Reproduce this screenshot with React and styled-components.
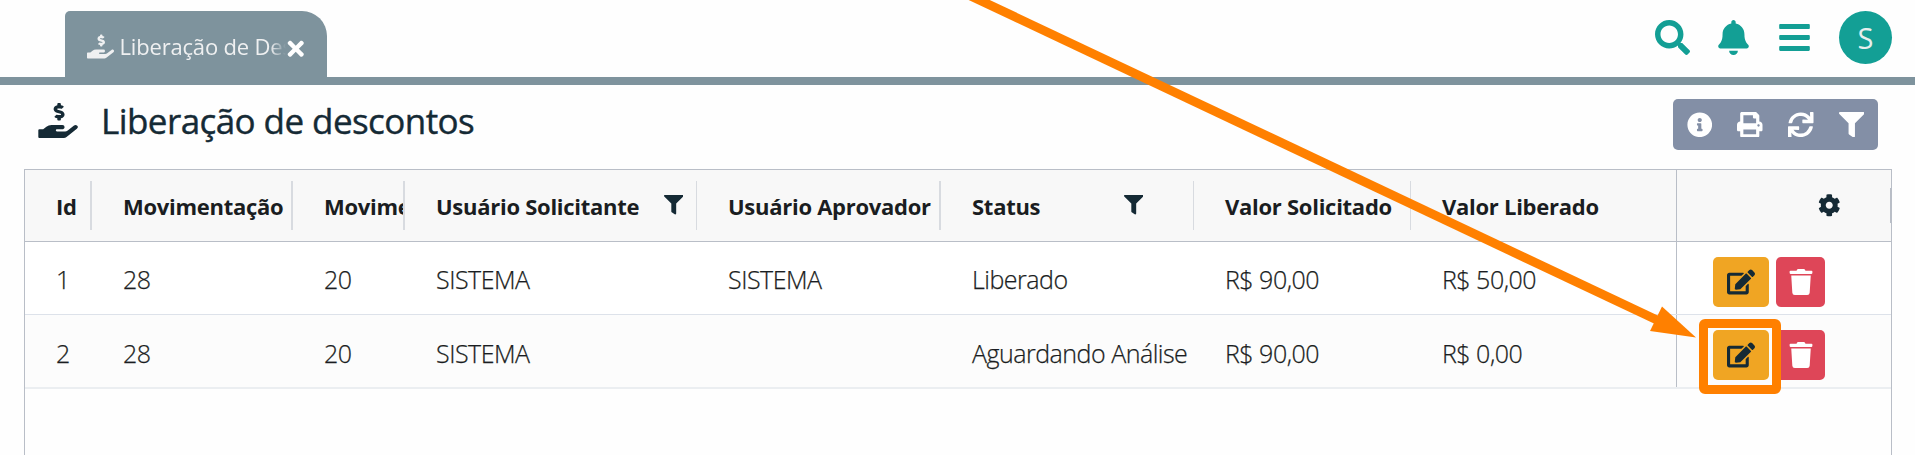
import React from "react";
import styled, { createGlobalStyle } from "styled-components";
import {
  FaHandHoldingUsd, FaTimes, FaSearch, FaBell, FaBars, FaInfoCircle,
  FaPrint, FaSync, FaFilter, FaCog, FaEdit, FaTrash,
} from "react-icons/fa";

const GlobalStyle = createGlobalStyle`
  *, *::before, *::after { box-sizing: border-box; }
  html, body { margin: 0; height: 100%; overflow: hidden; background: #fefefe; }
  body { font-family: "Open Sans", "Noto Sans", sans-serif; color: #1a1d21; }
`;

const Page = styled.div`
  position: relative;
  width: 1915px;
  height: 455px;
  overflow: hidden;
  display: flex;
  flex-direction: column;
`;

const TopBar = styled.header`
  display: flex;
  justify-content: space-between;
  align-items: stretch;
  height: 85px;
  flex: none;
  padding: 11px 23px 0 65px;
  border-bottom: 8px solid #7e939d;
`;

const Tab = styled.div`
  display: flex;
  align-items: center;
  width: 262px;
  padding: 4px 24px 0 22px;
  border-radius: 5px 25px 0 0;
  background: #7e939d;
  color: #eff0f1;
  svg { flex: none; }
`;

const TabLabel = styled.span`
  flex: 1;
  margin-left: 5.5px;
  overflow: hidden;
  white-space: nowrap;
  font-size: 22px;
  line-height: 32px;
  letter-spacing: -0.18px;
  mask-image: linear-gradient(to right, #000 150px, transparent 166px);
`;

const CloseIcon = styled(FaTimes)`
  color: #fff;
  font-size: 23.5px;
  margin: 6px -4px 0 -4px;
`;

const TopActions = styled.nav`
  display: flex;
  align-items: flex-start;
  color: #139f95;
`;

const IconSlot = styled.span`
  display: flex;
  justify-content: center;
  align-items: center;
  width: 61px;
  height: 53px;
  font-size: 35px;
`;

const Avatar = styled.span`
  width: 53px;
  height: 53px;
  margin-left: 14px;
  border-radius: 50%;
  background: #139f95;
  color: #e6efee;
  font-size: 29px;
  line-height: 54px;
  text-align: center;
`;

const TitleBar = styled.section`
  display: flex;
  align-items: flex-start;
  height: 84px;
  flex: none;
  padding: 14px 37px 0 38px;
`;

const TitleIcon = styled(FaHandHoldingUsd)`
  color: #152a35;
  height: 35px;
  width: 40px;
  margin-top: 4px;
`;

const Title = styled.h1`
  flex: 1;
  margin: -2px 0 0 23px;
  font-size: 35px;
  line-height: 48px;
  font-weight: 400;
  letter-spacing: -0.57px;
  color: #152a35;
  -webkit-text-stroke: 0.4px #152a35;
`;

const Toolbar = styled.div`
  display: flex;
  align-items: center;
  height: 51px;
  padding: 0 1px;
  border-radius: 5px;
  background: #838fa6;
`;

const ToolButton = styled.button`
  display: flex;
  justify-content: center;
  align-items: center;
  width: 50.75px;
  height: 51px;
  padding: 0;
  border: 0;
  background: none;
  color: #fff;
  font-size: 25.5px;
`;

const Grid = styled.section`
  flex: 1;
  margin: 0 23px 0 24px;
  border: 1px solid #b9bec7;
  border-bottom: 0;
`;

const columns = "67px 201px 112px 292px 244px 253px 217px 265px 215px";

const HeaderRow = styled.div`
  display: grid;
  grid-template-columns: ${columns};
  height: 72px;
  background: #f8f8f8;
  border-bottom: 1px solid #b9bec7;
`;

const HeaderCell = styled.div`
  display: flex;
  align-items: center;
  justify-content: space-between;
  min-width: 0;
  height: 49px;
  margin-top: 11px;
  padding: 0 ${(p) => p.$end || 0}px 0 31px;
  border-right: ${(p) => p.$rule}px solid #d8dbe0;
  overflow: hidden;
  white-space: nowrap;
  font-size: 22px;
  font-weight: 700;
  letter-spacing: -0.27px;
  svg { font-size: 19.5px; color: #152a35; margin-top: -1px; }
`;

const PinnedHeader = styled.div`
  display: flex;
  align-items: center;
  justify-content: flex-end;
  height: 71px;
  border-left: 1px solid #b9bec7;
`;

const Cog = styled(FaCog)`
  color: #152a35;
  font-size: 22.5px;
  margin: 0 50px 0 0;
`;

const PinHandle = styled.span`
  width: 1px;
  height: 35px;
  background: #b9bec7;
`;

const Row = styled.div`
  display: grid;
  grid-template-columns: ${columns};
  grid-template-rows: 72px;
  height: ${(p) => (p.$last ? 74 : 73)}px;
  background: ${(p) => (p.$last ? "#fcfcfc" : "#fff")};
  border-bottom: ${(p) => (p.$last ? "2px solid #ebeef1" : "1px solid #dde2ea")};
  line-height: ${(p) => (p.$last ? 76 : 74)}px;
`;

const Cell = styled.div`
  padding-left: 31px;
  white-space: nowrap;
  font-size: 25px;
  font-weight: 300;
  letter-spacing: -0.5px;
  -webkit-text-stroke: 0.25px #1a1d21;
`;

const Actions = styled.div`
  display: flex;
  gap: 7px;
  padding: 15px 0 0 36px;
  border-left: 1px solid #b9bec7;
`;

const ActionButton = styled.button`
  display: flex;
  justify-content: center;
  align-items: center;
  width: ${(p) => (p.$danger ? 49 : 56)}px;
  height: 50px;
  padding: 0;
  border: 0;
  border-radius: 5px;
  background: ${(p) => (p.$danger ? "#de4658" : "#f0a523")};
  color: ${(p) => (p.$danger ? "#fff" : "#152a35")};
  font-size: ${(p) => (p.$danger ? 26 : 28)}px;
`;

const Annotation = styled.svg`
  position: absolute;
  inset: 0;
  pointer-events: none;
`;

const headers = [
  { label: "Id", rule: 2 },
  { label: "Movimentação", rule: 2 },
  { label: "Movimentação", rule: 2 },
  { label: "Usuário Solicitante", rule: 1, filter: true, end: 13 },
  { label: "Usuário Aprovador", rule: 2 },
  { label: "Status", rule: 1, filter: true, end: 50 },
  { label: "Valor Solicitado", rule: 1 },
  { label: "Valor Liberado", rule: 0 },
];

const rows = [
  ["1", "28", "20", "SISTEMA", "SISTEMA", "Liberado", "R$ 90,00", "R$ 50,00"],
  ["2", "28", "20", "SISTEMA", "", "Aguardando Análise", "R$ 90,00", "R$ 0,00"],
];

export default function App() {
  return (
    <Page>
      <GlobalStyle />
      <TopBar>
        <Tab>
          <FaHandHoldingUsd size={27} />
          <TabLabel>Liberação de Descontos</TabLabel>
          <CloseIcon />
        </Tab>
        <TopActions>
          <IconSlot><FaSearch /></IconSlot>
          <IconSlot><FaBell /></IconSlot>
          <IconSlot><FaBars /></IconSlot>
          <Avatar>S</Avatar>
        </TopActions>
      </TopBar>
      <TitleBar>
        <TitleIcon />
        <Title>Liberação de descontos</Title>
        <Toolbar>
          <ToolButton><FaInfoCircle /></ToolButton>
          <ToolButton><FaPrint /></ToolButton>
          <ToolButton><FaSync /></ToolButton>
          <ToolButton><FaFilter /></ToolButton>
        </Toolbar>
      </TitleBar>
      <Grid>
        <HeaderRow>
          {headers.map((h, i) => (
            <HeaderCell key={i} $rule={h.rule} $end={h.end}>
              {h.label}
              {h.filter && <FaFilter />}
            </HeaderCell>
          ))}
          <PinnedHeader><Cog /><PinHandle /></PinnedHeader>
        </HeaderRow>
        {rows.map((cells, r) => (
          <Row key={r} $last={r === 1}>
            {cells.map((c, i) => <Cell key={i}>{c}</Cell>)}
            <Actions>
              <ActionButton><FaEdit /></ActionButton>
              <ActionButton $danger><FaTrash /></ActionButton>
            </Actions>
          </Row>
        ))}
      </Grid>
      <Annotation width="1915" height="455" viewBox="0 0 1915 455">
        <path d="M958 -10 L1658 320.5" stroke="#ff8000" strokeWidth="9" fill="none" />
        <path d="M1696 337.5 L1662 306.5 L1650 331 Z" fill="#ff8000" />
        <rect x="1703.5" y="323.5" width="73" height="66" rx="1.5" fill="none" stroke="#ff8000" strokeWidth="9" />
      </Annotation>
    </Page>
  );
}
